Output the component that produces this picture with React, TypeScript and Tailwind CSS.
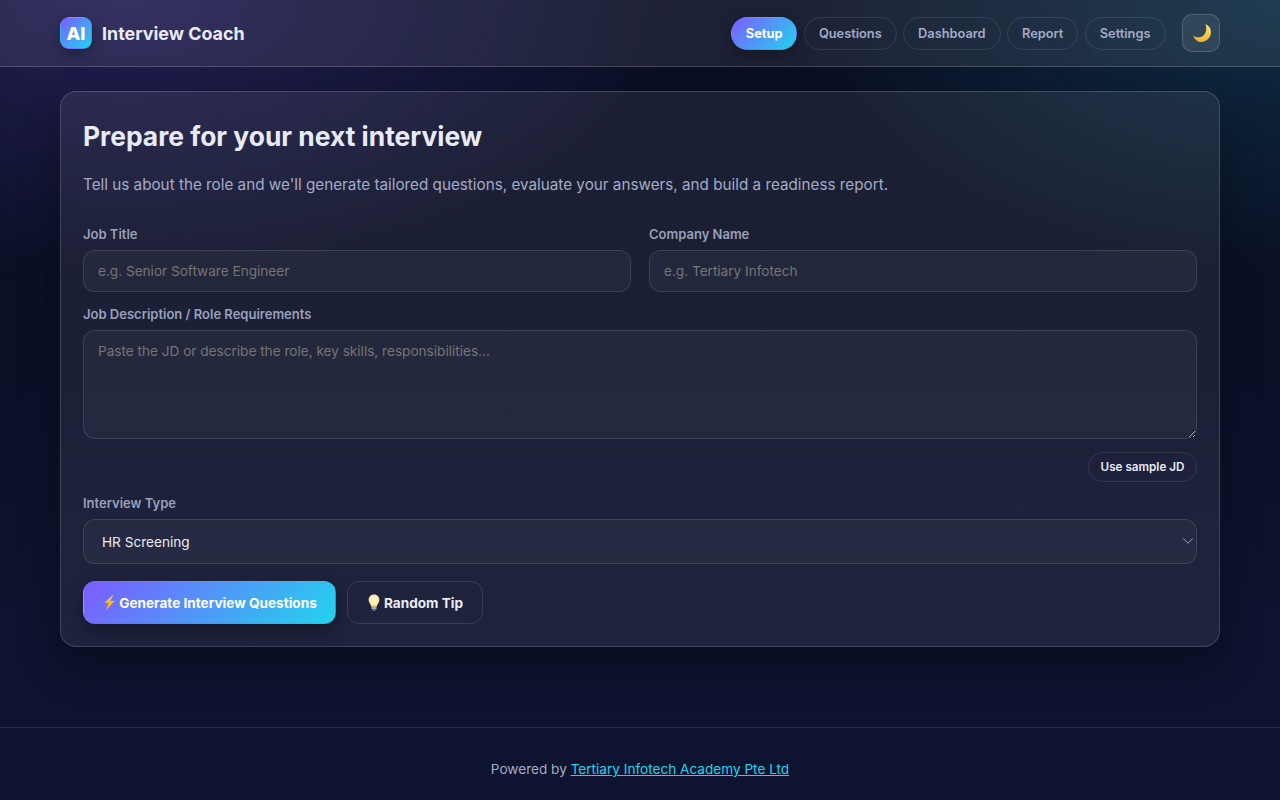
import { ChevronDown } from 'lucide-react';

const navItems = ['Questions', 'Dashboard', 'Report', 'Settings'];

function Moon() {
  return (
    <svg width="18" height="18" viewBox="0 0 18 18" className="ml-[2px]">
      <defs>
        <linearGradient id="moonFill" x1="0.8" y1="0" x2="0.3" y2="1">
          <stop offset="0" stopColor="#fbe26a" />
          <stop offset="1" stopColor="#eeb02c" />
        </linearGradient>
      </defs>
      <path d="M12.5 0C16 1.5 18 4.6 18 8c0 5.5-4.5 10-10 10-3.5 0-6.4-2.4-8-6.5 2.2 1.8 5 2.3 7.8 1.5C12 11.600 14.600 6.500 12.500 0z" fill="url(#moonFill)" />
    </svg>
  );
}

function Bolt() {
  return (
    <svg width="14" height="17" viewBox="0 0 14 17" className="-mt-[2px]">
      <defs>
        <linearGradient id="boltFill" x1="0.7" y1="0" x2="0.3" y2="1">
          <stop offset="0" stopColor="#fcd34d" />
          <stop offset="1" stopColor="#f59e0b" />
        </linearGradient>
      </defs>
      <path d="M11.5 0.3L2 9.3l4.6-.5L3.6 16.7 12.800 6.700l-4.600.5z" fill="url(#boltFill)" />
    </svg>
  );
}

function Bulb() {
  return (
    <svg width="14" height="18" viewBox="0 0 14 18" className="-mt-[2px]">
      <defs>
        <radialGradient id="bulbFill" cx="0.5" cy="0.4" r="0.6">
          <stop offset="0" stopColor="#fffbe0" />
          <stop offset="1" stopColor="#fbe08a" />
        </radialGradient>
      </defs>
      <path d="M7 0.4C3.7 0.4 1.6 2.9 1.6 5.8c0 2.4 1.4 3.7 2.1 5.2.3.6.4 1.2.5 1.8h5.6c.1-.6.2-1.2.5-1.8.7-1.5 2.1-2.8 2.1-5.2C12.400 2.900 10.300.4 7 .4z" fill="url(#bulbFill)" />
      <rect x="4.4" y="13" width="5.2" height="2.6" rx="0.8" fill="#a8adb8" />
      <rect x="5.5" y="15.6" width="3" height="1.4" rx="0.7" fill="#6b7280" />
    </svg>
  );
}

export default function App() {
  return (
    <div className="min-h-[800px] flex flex-col bg-[radial-gradient(800px_400px_at_10%_0%,rgba(124,92,255,0.22),transparent_70%),radial-gradient(700px_400px_at_100%_0%,rgba(34,211,238,0.15),transparent_70%),linear-gradient(180deg,#0a0f24_30%,#0e1330_85%)] text-[#e8ebf5] font-['Inter',sans-serif]">
      <header className="h-[67px] border-b border-white/[0.16] bg-white/[0.08]">
        <div className="mx-auto w-[1160px] h-full flex items-center">
          <div className="w-8 h-8 rounded-[9px] border border-transparent bg-[linear-gradient(135deg,#7c5cff,#22d3ee)] flex items-center justify-center text-white text-[18px] font-extrabold shadow-[0_6px_16px_rgba(0,0,0,0.3)]">
            AI
          </div>
          <div className="ml-[10px] pt-[2px] text-[17.9px] font-bold">Interview Coach</div>
          <nav className="ml-auto flex items-center gap-[6.4px]">
            <button className="h-[33px] pt-[2px] px-[14px] rounded-full border border-transparent bg-[linear-gradient(135deg,#7c5cff,#22d3ee)] text-white text-[12.8px] font-bold shadow-[0_6px_16px_rgba(0,0,0,0.3)]">
              Setup
            </button>
            {navItems.map((item) => (
              <button key={item} className="h-[33px] pt-[2px] px-[14px] rounded-full border border-white/[0.1] text-[#a3abc6] text-[12.8px] font-semibold">
                {item}
              </button>
            ))}
          </nav>
          <button className="ml-[16.5px] w-[38px] h-[38px] rounded-[10px] border border-white/[0.16] bg-white/[0.08] flex items-center justify-center">
            <Moon />
          </button>
        </div>
      </header>

      <main className="flex-1 mx-auto w-[1160px] pt-6">
        <section className="h-[556px] rounded-[16px] border border-white/[0.16] bg-white/[0.07] px-[22px] pt-[26px] shadow-[0_20px_40px_rgba(0,0,0,0.3)]">
          <h1 className="text-[26.4px] leading-[36px] font-bold text-[#e8ebf5]">Prepare for your next interview</h1>
          <p className="mt-[19px] text-[15.25px] leading-[24px] text-[#a3abc6]">
            Tell us about the role and we'll generate tailored questions, evaluate your answers, and build a readiness report.
          </p>

          <div className="mt-[29px] grid grid-cols-2 gap-[18px]">
            <div>
              <label className="block text-[13px] leading-[16px] font-semibold text-[#98a0bc] mb-2">Job Title</label>
              <input className="w-full h-[42px] px-[14px] rounded-[12px] border border-white/[0.12] bg-white/[0.04] text-[13.6px] placeholder:text-[#757575]" placeholder="e.g. Senior Software Engineer" />
            </div>
            <div>
              <label className="block text-[13px] leading-[16px] font-semibold text-[#98a0bc] mb-2">Company Name</label>
              <input className="w-full h-[42px] px-[14px] rounded-[12px] border border-white/[0.12] bg-white/[0.04] text-[13.6px] placeholder:text-[#757575]" placeholder="e.g. Tertiary Infotech" />
            </div>
          </div>

          <label className="block mt-[14px] text-[13px] leading-[16px] font-semibold text-[#98a0bc] mb-2">Job Description / Role Requirements</label>
          <textarea className="block w-full h-[109px] px-[14px] py-[10px] rounded-[12px] border border-white/[0.12] bg-white/[0.04] text-[13.6px] placeholder:text-[#757575]" placeholder="Paste the JD or describe the role, key skills, responsibilities..." />

          <div className="mt-[13px] flex justify-end">
            <button className="h-[30px] pt-[2px] px-[11.5px] rounded-full border border-white/[0.1] text-[11.7px] font-semibold text-[#e8ebf5]">Use sample JD</button>
          </div>

          <label className="block mt-[13px] text-[13px] leading-[16px] font-semibold text-[#98a0bc] mb-2">Interview Type</label>
          <div className="relative">
            <select className="appearance-none block w-full h-[45px] pt-[2px] pl-[18px] pr-8 rounded-[12px] border border-white/[0.12] bg-white/[0.04] text-[13.6px] text-[#e8ebf5]">
              <option>HR Screening</option>
            </select>
            <ChevronDown className="absolute right-0 top-[13px] text-[#8d93a8]" size={18} strokeWidth={1.4} />
          </div>

          <div className="mt-[17px] flex gap-[11px]">
            <button className="h-[43px] w-[253px] pt-[2px] rounded-[12px] border border-transparent bg-[linear-gradient(135deg,#7c5cff,#22d3ee)] text-white text-[13.6px] font-bold flex items-center justify-center gap-[3px] shadow-[0_8px_20px_rgba(0,0,0,0.3)]">
              <Bolt />
              Generate Interview Questions
            </button>
            <button className="h-[43px] w-[136px] pt-[2px] rounded-[12px] border border-white/[0.12] text-[#e8ebf5] text-[13.6px] font-bold flex items-center justify-center gap-[3px]">
              <Bulb />
              Random Tip
            </button>
          </div>
        </section>
      </main>

      <footer className="h-[73px] border-t border-white/[0.12] flex items-center justify-center pt-[11px] text-[13.6px] text-[#a3abc6]">
        <span>
          Powered by <a href="#" className="text-[#22d3ee] underline">Tertiary Infotech Academy Pte Ltd</a>
        </span>
      </footer>
    </div>
  );
}
